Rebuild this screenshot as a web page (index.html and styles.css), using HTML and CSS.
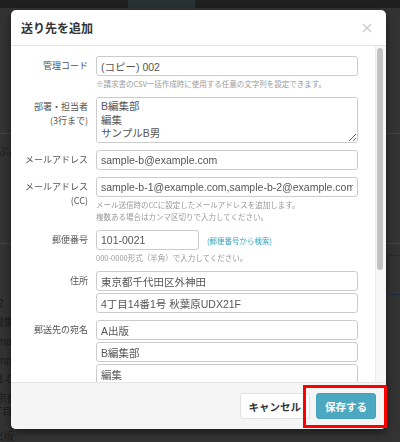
FILE: index.html
```html
<!DOCTYPE html>
<html lang="ja">
  <head>
    <meta charset="utf-8">
    <title>送り先を追加</title>
    <link rel="stylesheet" href="styles.css">
  </head>

  <body>
    <div class="page">
      <div class="topbar"><span class="topbar-tab"></span></div>
      <div class="band band-top"></div>
      <div class="band band-mid"><span class="bg-text">ぶん</span></div>
      <div class="bg-panel">
        <ul class="bg-values">
          <li>002</li>
          <li>B編集部</li>
          <li>sample-b</li>
          <li>sample-b</li>
          <li>101-0021</li>
          <li class="tight">東京都</li>
          <li class="tight">4丁目</li>
          <li class="last">A出版</li>
        </ul>
        <span class="bg-button"></span>
      </div>
    </div>

    <div class="modal">
      <div class="modal-header">
        <h4 class="modal-title">送り先を追加</h4>
        <svg class="close" width="10" height="10" viewBox="0 0 10 10">
          <path d="M1 1L9 9M9 1L1 9" stroke="#c8c8c8" stroke-width="1.2" fill="none" />
        </svg>
      </div>

      <div class="modal-body">
        <div class="form">
          <div class="field">
            <label class="label">管理コード</label>
            <div>
              <input class="input" type="text" value="(コピー) 002">
              <p class="help">※請求書のCSV一括作成時に使用する任意の文字列を設定できます。</p>
            </div>
          </div>

          <div class="field">
            <label class="label">部署・担当者<br>(3行まで)</label>
            <textarea class="input textarea">B編集部
編集
サンプルB男</textarea>
          </div>

          <div class="field">
            <label class="label">メールアドレス</label>
            <input class="input" type="text" value="sample-b@example.com">
          </div>

          <div class="field">
            <label class="label">メールアドレス<br>(CC)</label>
            <div>
              <input class="input" type="text" value="sample-b-1@example.com,sample-b-2@example.com">
              <p class="help">メール送信時のCCに設定したメールアドレスを追加します。<br>複数ある場合はカンマ区切りで入力してください。</p>
            </div>
          </div>

          <div class="field">
            <label class="label">郵便番号</label>
            <div>
              <div class="postal">
                <input class="input postal-input" type="text" value="101-0021">
                <a class="search-link">(郵便番号から検索)</a>
              </div>
              <p class="help">000-0000形式（半角）で入力してください。</p>
            </div>
          </div>

          <div class="field">
            <label class="label">住所</label>
            <div class="stack">
              <input class="input" type="text" value="東京都千代田区外神田">
              <input class="input" type="text" value="4丁目14番1号 秋葉原UDX21F">
            </div>
          </div>

          <div class="field">
            <label class="label">郵送先の宛名</label>
            <div class="stack">
              <input class="input" type="text" value="A出版">
              <input class="input" type="text" value="B編集部">
              <input class="input" type="text" value="編集">
            </div>
          </div>
        </div>

        <div class="scrollbar"><div class="thumb"></div></div>
      </div>

      <div class="modal-footer">
        <button class="btn btn-default">キャンセル</button>
        <button class="btn btn-primary">保存する</button>
      </div>
    </div>

    <div class="highlight"></div>
  </body>
</html>
```

FILE: styles.css
```css
body {
  margin: 0;
  height: 442px;
  overflow: hidden;
  background: #333;
  font-family: "Noto Sans CJK JP", sans-serif;
}

/* page under the dialog */
.page {
  height: 442px;
}
.topbar {
  height: 8px;
  background: #1f1f1f;
  display: flex;
}
.topbar-tab {
  width: 67px;
  margin-left: 128px;
  background: #263133;
}
.band-top {
  height: 125px;
  border-bottom: 1px solid #444;
}
.band-mid {
  height: 109px;
  border-bottom: 1px solid #444;
}
.bg-text {
  display: block;
  padding-top: 10px;
  margin-left: -2px;
  font-size: 10.5px;
  line-height: 13px;
  color: #1c1c1c;
}
.bg-panel {
  display: flex;
  justify-content: space-between;
  align-items: flex-start;
  padding-top: 11px;
}
.bg-values {
  list-style: none;
  margin: 42px 0 0 -14px;
  padding: 0;
  font-family: "Liberation Sans", "Noto Sans CJK JP", sans-serif;
  font-size: 10.5px;
  color: #1c1c1c;
}
.bg-values li {
  height: 19px;
  line-height: 13px;
}
.bg-values li.tight {
  height: 13px;
}
.bg-values li.last {
  margin-top: 12px;
}
.bg-button {
  width: 30px;
  height: 40px;
  margin-right: -17px;
  box-sizing: border-box;
  border: 1px solid #1d2c42;
  border-radius: 3px;
}

/* dialog */
.modal {
  position: absolute;
  left: 11px;
  top: 10px;
  width: 375px;
  height: 419px;
  background: #fff;
  border-radius: 5px;
  box-shadow: 0 3px 9px rgba(0, 0, 0, 0.5);
  display: flex;
  flex-direction: column;
  overflow: hidden;
}
.modal-header {
  flex: none;
  height: 35px;
  border-bottom: 1px solid #e5e5e5;
  display: flex;
  align-items: center;
  justify-content: space-between;
  padding: 0 14px 0 10px;
}
.modal-title {
  margin: 0;
  font-size: 12px;
  font-weight: bold;
  color: #333;
}
.modal-body {
  flex: 1;
  min-height: 0;
  display: flex;
}
.form {
  flex: 1;
  overflow: hidden;
  padding: 10px 17px 0 0;
}
.scrollbar {
  flex: none;
  width: 7px;
  padding: 2px 2px 0 1px;
  background: #f7f7f7;
  border-left: 1px solid #ececec;
}
.thumb {
  width: 6px;
  height: 222px;
  border-radius: 3px;
  background: #c2c2c2;
}

.field {
  display: grid;
  grid-template-columns: 77px 1fr;
  column-gap: 8px;
  margin-bottom: 7px;
}
.label {
  font-size: 9px;
  line-height: 14px;
  padding-top: 3px;
  color: #555;
  text-align: right;
}
.input {
  display: block;
  width: 100%;
  height: 20px;
  box-sizing: border-box;
  margin: 0;
  padding: 0 4px;
  border: 1px solid #ccc;
  border-radius: 3px;
  background: #fff;
  font-family: "Liberation Sans", "Noto Sans CJK JP", sans-serif;
  font-size: 10.5px;
  color: #555;
}
.textarea {
  height: 46px;
  padding: 2px 4px;
  line-height: 13.5px;
  resize: vertical;
}
.help {
  margin: 2px 0 0;
  font-size: 7.5px;
  line-height: 12px;
  color: #999;
}
.stack {
  display: flex;
  flex-direction: column;
  gap: 2px;
}
.postal {
  display: flex;
  align-items: center;
  gap: 8px;
}
.postal-input {
  width: 103px;
}
.search-link {
  font-size: 7.5px;
  color: #3aa3bc;
}

.modal-footer {
  flex: none;
  height: 47px;
  box-sizing: border-box;
  padding: 10px 10px 0;
  border-top: 1px solid #e5e5e5;
  background: #f5f5f5;
  display: flex;
  justify-content: flex-end;
  align-items: flex-start;
  gap: 6px;
}
.btn {
  height: 26px;
  padding: 0 8px;
  border-radius: 3px;
  font-family: "Noto Sans CJK JP", sans-serif;
  font-size: 10.5px;
  font-weight: bold;
}
.btn-default {
  background: #fff;
  border: 1px solid #e2e2e2;
  color: #333;
}
.btn-primary {
  background: #4ba8c0;
  border: 1px solid #46a2ba;
  color: #fff;
}

.highlight {
  position: absolute;
  left: 303px;
  top: 385px;
  width: 84px;
  height: 43px;
  box-sizing: border-box;
  border: 3px solid #f00;
}
```
